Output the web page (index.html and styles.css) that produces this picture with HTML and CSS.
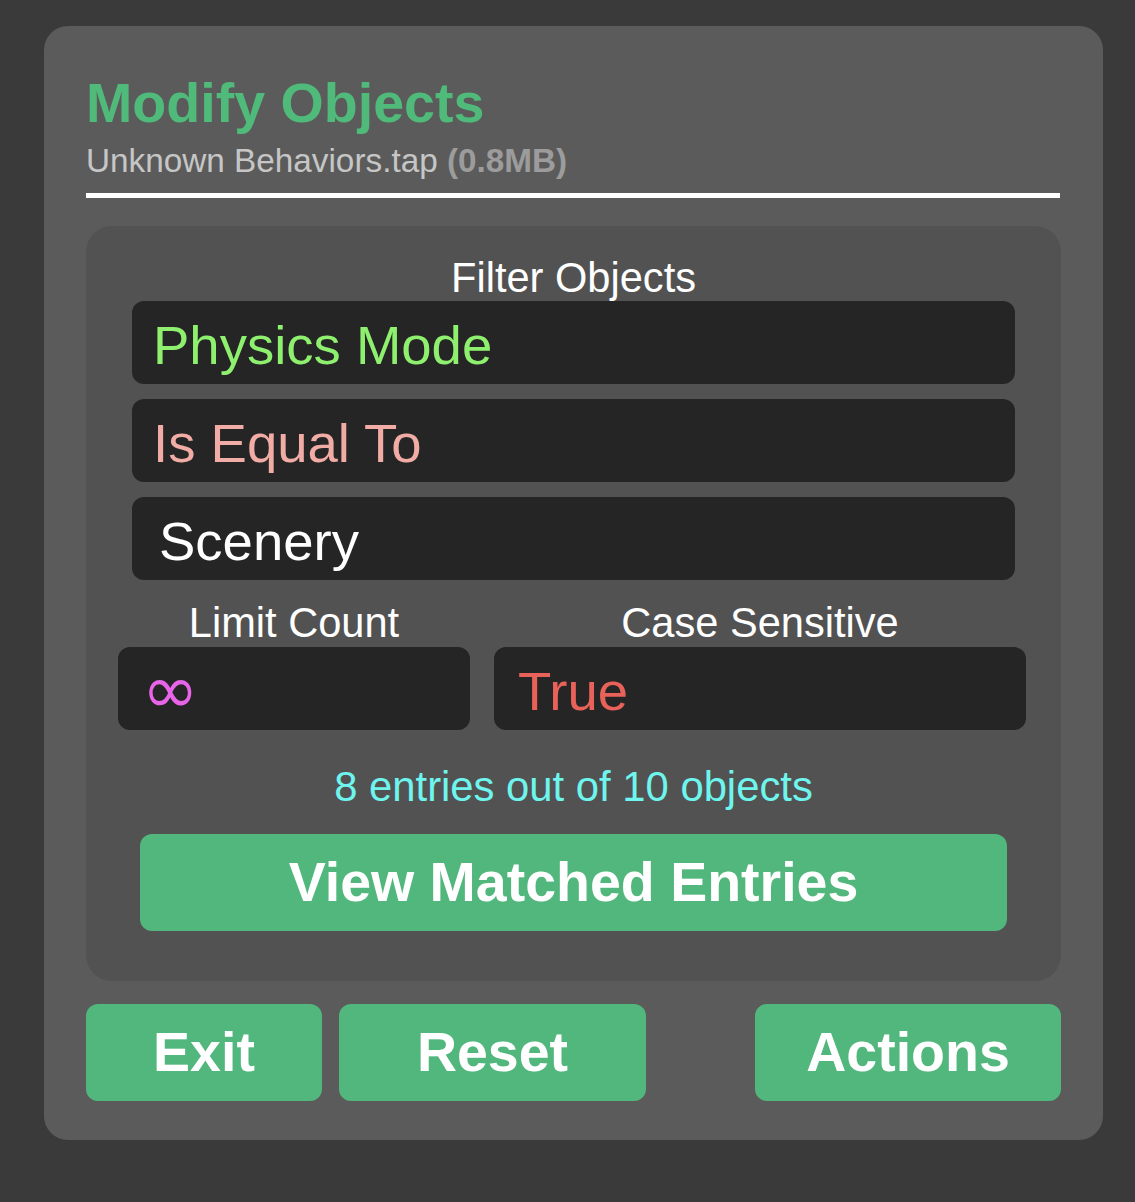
FILE: index.html
```html
<!DOCTYPE html>
<html lang="en">
<head>
<meta charset="utf-8">
<title>Modify Objects</title>
<link rel="stylesheet" href="styles.css">
</head>
<body>
<div class="panel">
  <h1 class="title">Modify Objects</h1>
  <div class="subtitle">Unknown Behaviors.tap <b class="size">(0.8MB)</b></div>
  <div class="rule"></div>
  <div class="card">
    <div class="label">Filter Objects</div>
    <div class="field field-key">Physics Mode</div>
    <div class="field field-op">Is Equal To</div>
    <div class="field field-val">Scenery</div>
    <div class="row">
      <div class="col col-limit">
        <div class="label">Limit Count</div>
        <div class="box"><span class="inf">∞</span></div>
      </div>
      <div class="col col-case">
        <div class="label">Case Sensitive</div>
        <div class="box"><span class="true">True</span></div>
      </div>
    </div>
    <div class="count">8 entries out of 10 objects</div>
    <button class="btn btn-view">View Matched Entries</button>
  </div>
  <div class="actions">
    <button class="btn btn-exit">Exit</button>
    <button class="btn btn-reset">Reset</button>
    <button class="btn btn-actions">Actions</button>
  </div>
</div>
</body>
</html>
```
FILE: styles.css
```css
* { box-sizing: border-box; }
html, body { margin: 0; padding: 0; }
body {
  background: #3a3a3a;
  font-family: "Liberation Sans", Arial, sans-serif;
  width: 1135px;
  height: 1202px;
  overflow: hidden;
}
.panel {
  margin: 26px 0 0 44px;
  width: 1059px;
  height: 1114px;
  background: #5b5b5b;
  border-radius: 24px;
  padding: 50px 42px 39px;
  display: flex;
  flex-direction: column;
}
.title {
  margin: 0;
  font-size: 55.6px;
  line-height: 55px;
  font-weight: bold;
  color: #4fba7a;
}
.subtitle {
  margin-top: 13px;
  font-size: 33.3px;
  line-height: 33px;
  color: #c6c6c6;
}
.size { color: #9c9c9c; font-weight: bold; }
.rule {
  margin-top: 16px;
  height: 5px;
  background: #ffffff;
  margin-right: 1px;
}
.card {
  margin-top: 28px;
  background: #525252;
  border-radius: 26px;
  padding: 31px 0 50px;
  display: flex;
  flex-direction: column;
}
.label {
  font-size: 41.6px;
  line-height: 41px;
  color: #ffffff;
  text-align: center;
}
.field {
  margin: 0 46px 0 46px;
  height: 83px;
  background: #252525;
  border-radius: 12px;
  padding: 6px 0 0 21px;
  font-size: 54.5px;
  line-height: 77px;
  white-space: nowrap;
}
.card > .label + .field { margin-top: 3px; }
.field + .field { margin-top: 15px; }
.field-key { color: #8ef06e; }
.field-op { color: #f2aca6; }
.field-val { color: #ffffff; padding-left: 27px; }
.row {
  margin: 22px 35px 0 32px;
  display: grid;
  grid-template-columns: 352px 1fr;
  column-gap: 24px;
}
.col .label { margin-bottom: 4px; }
.box {
  height: 83px;
  background: #252525;
  border-radius: 12px;
  padding: 6px 0 0 24px;
  font-size: 54.5px;
  line-height: 77px;
  white-space: nowrap;
}
.inf {
  color: #e864e8;
  font-family: "DejaVu Sans", sans-serif;
  font-size: 68px;
  position: relative;
  top: -2px;
}
.true { color: #e8625a; }
.count {
  margin-top: 36px;
  font-size: 41.8px;
  line-height: 41px;
  color: #6ef5ee;
  text-align: center;
}
.btn {
  border: none;
  background: #52b77d;
  color: #ffffff;
  font-family: "Liberation Sans", Arial, sans-serif;
  font-weight: bold;
  font-size: 55.5px;
  line-height: 97px;
  height: 97px;
  padding: 0;
  border-radius: 12px;
  text-align: center;
}
.btn-view {
  margin: 27px 54px 0 54px;
}
.actions {
  margin-top: 23px;
  display: flex;
}
.btn-exit { width: 236px; }
.btn-reset { width: 307px; margin-left: 17px; }
.btn-actions { width: 306px; margin-left: auto; }
```
